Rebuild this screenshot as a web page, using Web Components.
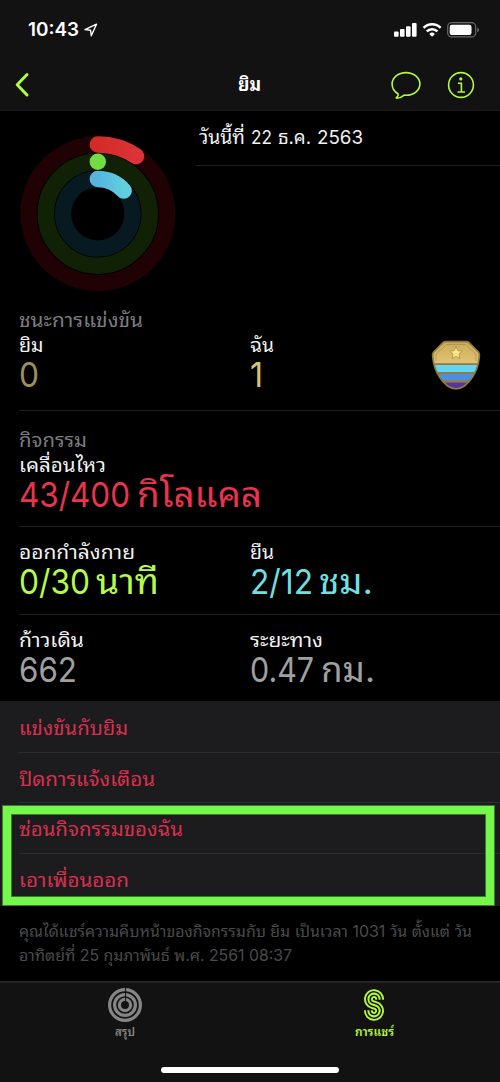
<!DOCTYPE html>
<html lang="th">
<head>
<meta charset="utf-8">
<title>กิจกรรม</title>
<style>
html{background:#000}
body{margin:0;background:#000;color:#f2f2f2;font-family:Inter,"Noto Sans Thai Looped","Noto Looped Thai",Loma,Waree,Garuda,Umpush,Laksaman,Norasi,FreeSans,FreeSerif,"Noto Sans Thai",sans-serif}
</style>
</head>
<body>
<activity-app></activity-app>
<script>
const define = (name, html, ready) => customElements.define(name, class extends HTMLElement {
  constructor() {
    super();
    this.attachShadow({ mode: 'open' }).innerHTML = html;
  }
  connectedCallback() { if (ready) ready.call(this, this.shadowRoot); }
});

/* A run of text condensed or widened to the width given in "w". */
define('fit-text', `<style>
:host{display:inline-block;white-space:pre;line-height:inherit}
span{display:inline-block;transform-origin:0 50%}
</style><span><slot></slot></span>`, function (root) {
  const w = parseFloat(this.getAttribute('w'));
  const span = root.querySelector('span');
  const natural = span.offsetWidth;
  if (w && natural) {
    const exact = span.getBoundingClientRect().width;
    span.style.transform = `scaleX(${w / exact})`;
    this.style.width = w + 'px';
  }
});

define('status-bar', `<style>
:host{display:flex;height:60px;box-sizing:border-box;padding:0 20px 0 28px;justify-content:space-between;align-items:center;color:#fff}
.l,.r{display:flex;align-items:center}
.l{gap:5px;font-size:19px;line-height:24px;font-weight:600}
svg{display:block}
</style>
<div class="l"><fit-text w="51">10:43</fit-text>
<svg width="14" height="14" viewBox="0 0 14 14"><path d="M1 6.6 12.5 1.2 7.3 12.8 6.6 7.2Z" fill="none" stroke="#fff" stroke-width="1.4" stroke-linejoin="round"/></svg></div>
<div class="r"><svg width="87" height="18" viewBox="393 21 87 18">
<g fill="#fff"><rect x="394" y="31.5" width="4.6" height="5.3" rx="1"/><rect x="400" y="29" width="4.6" height="7.8" rx="1"/><rect x="406" y="26.3" width="4.6" height="10.5" rx="1"/><rect x="412" y="23" width="4.6" height="13.8" rx="1"/></g>
<g fill="none" stroke="#fff" stroke-width="2.6"><path d="M423.6 27.8a12 12 0 0 1 17 0"/><path d="M426.8 31.4a7.5 7.5 0 0 1 10.6 0"/></g><path d="M432.1 36.8l-2.8-2.9a4 4 0 0 1 5.6 0z" fill="#fff"/>
<rect x="447.7" y="22.7" width="28" height="14.2" rx="4" fill="none" stroke="#6b6b6b" stroke-width="1.2"/><rect x="449.7" y="24.7" width="21.8" height="10.3" rx="2.2" fill="#fff"/><path d="M477.3 27.5v4.8c2.2-.8 2.2-4 0-4.8z" fill="#6b6b6b"/></svg></div>`);

define('nav-bar', `<style>
:host{display:grid;grid-template-columns:1fr auto 1fr;align-items:center;height:50px;padding:0 25px 0 14px;color:#b4fa3c;border-bottom:1px solid #191919}
h1{margin:0;font-size:19px;line-height:26px;font-weight:700;color:#fff;padding-left:10px}
.r{display:flex;justify-content:flex-end;align-items:center;gap:25px}
svg{display:block;fill:none;stroke:currentColor}
</style>
<svg width="16" height="26" viewBox="0 0 16 26"><path d="M13 2.5 3.200 12.800 13 23" stroke-width="3" stroke-linecap="round" stroke-linejoin="round"/></svg>
<h1><fit-text w="23">ยิม</fit-text></h1>
<div class="r"><svg width="32" height="30" viewBox="0 0 32 30"><path d="M8.2 24C4.6 22 2.1 18.6 2.1 14.1 2.1 7.7 8.2 2.6 16 2.6S29.9 7.7 29.9 14.1 23.7 25.3 16 25.3L14.2 25.1C12 27 9.3 28.3 6.8 28.3 6.1 28.3 6.1 27.7 6.6 27.4 7.8 26.5 8.6 25.3 8.2 24Z" stroke-width="1.6"/></svg>
<svg width="28" height="28" viewBox="0 0 28 28"><circle cx="14" cy="14" r="12.4" stroke-width="1.6"/><circle cx="13.8" cy="7.9" r="1.6" fill="currentColor" stroke="none"/><path d="M11 12.2h3.4v8.5M10.5 21h7.5" stroke-width="1.6"/></svg></div>`);

define('activity-rings', `<style>:host{display:block;width:196px;height:196px}svg{display:block}</style>
<svg width="196" height="196" viewBox="0 111 196 196" fill="none" stroke-width="16.4" stroke-linecap="round">
<defs><linearGradient id="m"><stop stop-color="#d32c27"/><stop offset="1" stop-color="#dc3338"/></linearGradient><linearGradient id="s"><stop stop-color="#55b5df"/><stop offset="1" stop-color="#5fcfdc"/></linearGradient></defs>
<circle cx="97.8" cy="213.8" r="69.3" stroke="#200204"/><circle cx="97.8" cy="213.8" r="52" stroke="#112105"/><circle cx="97.8" cy="213.8" r="34.8" stroke="#081a21"/>
<path d="M97.8 144.5A69.3 69.3 0 0 1 136.1 156.1" stroke="url(#m)"/>
<path d="M97.8 161.8h.01" stroke="#73dc42"/>
<path d="M97.8 179A34.8 34.8 0 0 1 123.7 190.6" stroke="url(#s)"/>
</svg>`);

define('ring-header', `<style>
:host{display:flex;height:196px}
.d{flex:1;height:54px;border-bottom:1px solid #1e1e1e;box-sizing:content-box;font-size:19px;line-height:26px;color:#f2f2f2}
.d div{padding:14px 0 0 3px}
</style><activity-rings></activity-rings><div class="d"><div><slot></slot></div></div>`);

define('award-badge', `<style>:host{display:block}svg{display:block}</style>
<svg width="50" height="52" viewBox="431 339 50 52">
<defs><linearGradient id="g" x1="0" y1="0" x2="0" y2="1"><stop stop-color="#c8aa55"/><stop offset=".45" stop-color="#e0c273"/><stop offset="1" stop-color="#846a30"/></linearGradient>
<clipPath id="c"><path d="M445.5 341.6H466.5Q468 341.6 469 342.6L478.2 351.8Q479.6 353.4 479.3 356C478.5 368 473 379 464 386.3Q456 391.5 448 386.3C439 379 433.5 368 432.7 356Q432.4 353.4 433.8 351.8L443 342.6Q444 341.6 445.5 341.6Z"/></clipPath></defs>
<g clip-path="url(#c)"><path d="M431 339h50v52h-50z" fill="url(#g)"/><path d="M431 365h50v7h-50z" fill="#62d5f2"/><path d="M431 374h50v6.5h-50z" fill="#4e8ee0"/><path d="M431 382.3h50v9h-50z" fill="#58359c"/><path d="M431 364.2h50M431 373h50M431 381.5h50" stroke="#8e7b45" stroke-width="1.8"/></g>
<path d="M445.5 341.6H466.5Q468 341.6 469 342.6L478.2 351.8Q479.6 353.4 479.3 356C478.5 368 473 379 464 386.3Q456 391.5 448 386.3C439 379 433.5 368 432.7 356Q432.4 353.4 433.8 351.8L443 342.6Q444 341.6 445.5 341.6Z" fill="none" stroke="#8f7a40" stroke-width="1.7"/>
<path d="M446.5 344.5H465.5L476 354.5V361M446.5 344.5 436 354.5V361" fill="none" stroke="#a58b48" stroke-width=".7"/>
<path d="M456 346.6 457.9 350.6 462.2 351.1 459 354.1 459.8 358.5 456 356.4 452.2 358.5 453 354.1 449.8 351.1 454.1 350.6Z" fill="#f7e987" stroke="#a88c43" stroke-width=".8" stroke-linejoin="round"/>
</svg>`);

define('stat-section', `<style>
:host{display:block;box-sizing:border-box;margin-left:19px;border-bottom:1px solid #1e1e1e}
:host([last]){border-color:transparent}
.h{font-size:19px;line-height:25px;color:#7c7c80}
.row{display:grid;grid-template-columns:230.5px 181px auto}
::slotted(award-badge){margin-top:6px}
</style><div class="h"><slot name="title"></slot></div><div class="row"><slot></slot></div>`);

define('stat-item', `<style>
:host{display:block;white-space:nowrap}
.k{font-size:19px;line-height:25px;color:#f2f2f2}
.v{font-size:34.5px;line-height:33px;height:33px}
</style><div class="k"><slot name="k"></slot></div><div class="v"><slot></slot></div>`);

define('action-list', `<style>
:host{display:block;position:relative;height:204.5px;background:#1c1c1e;box-sizing:border-box;padding-top:1px}
.mark{position:absolute;left:2px;top:104px;width:493px;height:101px;box-sizing:border-box;border:9px solid #74f84b;outline:1px solid #3c7a2c;outline-offset:-1px;box-shadow:inset 0 0 0 1px #3c7a2c}
</style><slot></slot><div class="mark"></div>`);

define('action-row', `<style>
:host{display:block;height:50.7px;box-sizing:border-box;margin-left:19px;border-bottom:1px solid #2d2d2f;color:#d9304f;font-size:19px;line-height:26px;padding-top:14px}
:host(:last-of-type){border:0}
</style><slot></slot>`);

define('share-note', `<style>
:host{display:block;height:75px;box-sizing:border-box;padding:13px 0 0 19px;font-size:16px;line-height:24px;color:#4b4b4d}
</style><slot></slot>`);

define('tab-bar', `<style>
:host{display:flex;flex-direction:column;height:102px;box-sizing:border-box;background:#121212;border-top:2px solid #242424}
.tabs{display:grid;grid-template-columns:1fr 1fr;height:84px;padding:0 1px 0 0}
.t{display:flex;flex-direction:column;align-items:center;font-size:11.5px;line-height:16px;font-weight:600;color:#858585}
.t.on{color:#b4fa3c}
svg{display:block;margin:4px 0 1px}
.home{width:178px;height:6px;border-radius:3px;background:#fff;margin:0 auto}
</style><div class="tabs">
<div class="t"><svg width="36" height="36" viewBox="-18 -18 36 36" fill="none" stroke="currentColor"><g stroke-width="3.2"><circle r="15.4"/><circle r="10.4"/><circle r="5.6"/></g><path d="M.6-17.5V-4" stroke="#121212" stroke-width="1"/></svg><fit-text w="20">สรุป</fit-text></div>
<div class="t on"><svg width="36" height="36" viewBox="-18 -18 36 36" fill="none"><path d="M5.6-5.2V-5.8A5.6 5.6 0 1 0-1.46-.39L1.46.39A5.6 5.6 0 1 1-5.6 5.8V5.2" stroke="currentColor" stroke-width="8.8"/><path d="M5.6-5V-5.8A5.6 5.6 0 1 0-1.46-.39L1.46.39A5.6 5.6 0 1 1-5.6 5.8V5" stroke="#121212" stroke-width="5"/><path d="M5.6-5.2V-5.8A5.6 5.6 0 1 0-1.46-.39L1.46.39A5.6 5.6 0 1 1-5.6 5.8V5.2" stroke="currentColor" stroke-width="2.1"/></svg><fit-text w="39">การแชร์</fit-text></div>
</div><div class="home"></div>`);

define('activity-app', `<style>
:host{display:block;width:500px;height:1082px;overflow:hidden;background:#000}
.top{background:#121212}
.a{height:104px;padding-top:1px}.b{height:116px;padding-top:17px}.c{height:88px;padding-top:13px}.d{height:86px;padding-top:13px}
.lose{color:#a08f5c}.win{color:#dfc174}.move{color:#e8344f}.ex{color:#b4fa4b}.stand{color:#6fdfe2}.grey{color:#a0a0a0}
</style>
<div class="top"><status-bar></status-bar><nav-bar></nav-bar></div>
<ring-header><fit-text w="46">วันนี้ที่</fit-text><fit-text w="6"> </fit-text><fit-text w="21">22</fit-text><fit-text w="6"> </fit-text><fit-text w="33">ธ.ค.</fit-text><fit-text w="6"> </fit-text><fit-text w="46">2563</fit-text></ring-header>
<stat-section class="a"><fit-text slot="title" w="124">ชนะการแข่งขัน</fit-text>
<stat-item class="lose"><fit-text slot="k" w="24.5">ยิม</fit-text><fit-text w="20">0</fit-text></stat-item>
<stat-item class="win"><fit-text slot="k" w="24">ฉัน</fit-text><fit-text w="13">1</fit-text></stat-item>
<award-badge></award-badge></stat-section>
<stat-section class="b"><fit-text slot="title" w="68">กิจกรรม</fit-text>
<stat-item class="move"><fit-text slot="k" w="87">เคลื่อนไหว</fit-text><fit-text w="111">43/400</fit-text><fit-text w="7"> </fit-text><fit-text w="125">กิโลแคล</fit-text></stat-item></stat-section>
<stat-section class="c">
<stat-item class="ex"><fit-text slot="k" w="116">ออกกำลังกาย</fit-text><fit-text w="71">0/30</fit-text><fit-text w="6"> </fit-text><fit-text w="63">นาที</fit-text></stat-item>
<stat-item class="stand"><fit-text slot="k" w="24">ยืน</fit-text><fit-text w="63">2/12</fit-text><fit-text w="6"> </fit-text><fit-text w="54">ชม.</fit-text></stat-item></stat-section>
<stat-section class="d" last>
<stat-item class="grey"><fit-text slot="k" w="65">ก้าวเดิน</fit-text><fit-text w="58">662</fit-text></stat-item>
<stat-item class="grey"><fit-text slot="k" w="73">ระยะทาง</fit-text><fit-text w="64">0.47</fit-text><fit-text w="7"> </fit-text><fit-text w="54">กม.</fit-text></stat-item></stat-section>
<action-list>
<action-row><fit-text w="109">แข่งขันกับยิม</fit-text></action-row>
<action-row><fit-text w="136">ปิดการแจ้งเตือน</fit-text></action-row>
<action-row><fit-text w="164">ซ่อนกิจกรรมของฉัน</fit-text></action-row>
<action-row><fit-text w="110">เอาเพื่อนออก</fit-text></action-row>
</action-list>
<share-note><div><fit-text w="453">คุณได้แชร์ความคืบหน้าของกิจกรรมกับ ยิม เป็นเวลา 1031 วัน ตั้งแต่ วัน</fit-text></div><div><fit-text w="273">อาทิตย์ที่ 25 กุมภาพันธ์ พ.ศ. 2561 08:37</fit-text></div></share-note>
<tab-bar></tab-bar>`);
</script>
</body>
</html>
